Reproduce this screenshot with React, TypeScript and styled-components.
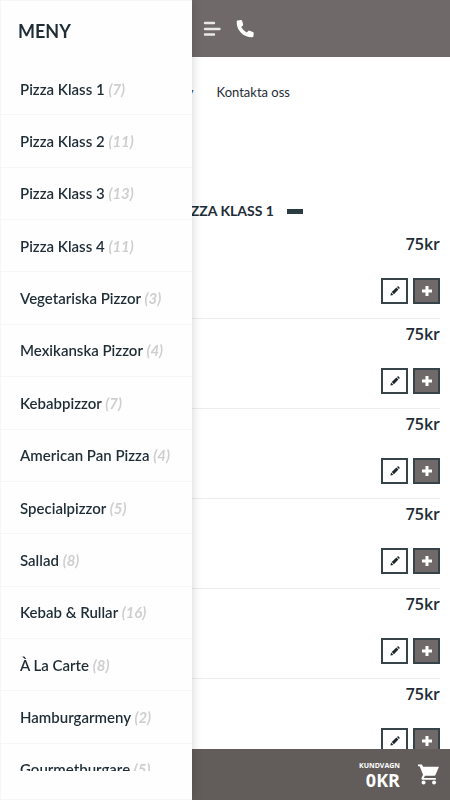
import React from "react";
import styled, { createGlobalStyle } from "styled-components";

const GlobalStyle = createGlobalStyle`
  * { box-sizing: border-box; }
  body { margin: 0; background: #fff; color: #1f2d36; font-family: Lato, sans-serif; overflow: hidden; }
  a { color: inherit; text-decoration: none; }
  button { padding: 0; border: 0; background: none; color: inherit; font: inherit; cursor: pointer; }
  svg { display: block; }
`;

const Page = styled.div`
  height: 100vh;
  display: flex;
  flex-direction: column;
`;

const TopBar = styled.header`
  flex: none;
  display: flex;
  align-items: center;
  gap: 15px;
  height: 57px;
  padding-left: 203px;
  background: #6f6a69;
  color: #fff;
`;

const Main = styled.main`
  flex: 1;
  min-height: 0;
  overflow: hidden;
`;

const Nav = styled.nav`
  display: flex;
  gap: 23px;
  padding: 24px 0 0 161px;
  font-size: 13px;
  line-height: 22px;
`;

const SectionTitle = styled.h2`
  display: flex;
  align-items: center;
  gap: 13px;
  margin: 98px 0 8px;
  padding-left: 178px;
  font-size: 14px;
  line-height: 20px;
  font-weight: 700;
`;

const Dash = styled.span`
  width: 16px;
  height: 5px;
  background: #2b3b42;
`;

const Products = styled.ul`
  list-style: none;
  margin: 0;
  padding: 0 10px;
`;

const Product = styled.li`
  display: flex;
  flex-direction: column;
  align-items: flex-end;
  justify-content: space-between;
  height: 90px;
  padding: 3px 0 14px;
  border-bottom: 1px solid #ececec;
`;

const Price = styled.span`
  font-family: "Open Sans", sans-serif;
  font-size: 16px;
  line-height: 24px;
  font-weight: 600;
`;

const Actions = styled.div`
  display: flex;
  gap: 5px;
`;

const ActionButton = styled.button<{ $filled?: boolean }>`
  display: grid;
  place-items: center;
  width: 27px;
  height: 26px;
  border: 2px solid #36444a;
  background: ${(p) => (p.$filled ? "#6f6a69" : "#fff")};
  color: ${(p) => (p.$filled ? "#fff" : "#1c2529")};
`;

const CartBar = styled.footer`
  flex: none;
  display: flex;
  align-items: center;
  justify-content: flex-end;
  gap: 18px;
  height: 51px;
  padding-right: 11px;
  background: #625c5b;
  color: #fff;
  text-align: right;
`;

const CartLabel = styled.div`
  font-family: "Open Sans", sans-serif;
  font-size: 7px;
  line-height: 10px;
  font-weight: 700;
`;

const CartTotal = styled.div`
  font-family: "Open Sans", sans-serif;
  font-size: 18px;
  line-height: 18px;
  font-weight: 700;
`;

const Drawer = styled.aside`
  position: fixed;
  inset: 0 auto 0 0;
  z-index: 2;
  display: flex;
  flex-direction: column;
  width: 192px;
  padding-bottom: 28px;
  border: 1px solid #f6f6f6;
  border-right: 0;
  background: #fefefe;
  box-shadow: 0 0 10px rgba(0, 0, 0, 0.18);
`;

const DrawerTitle = styled.h1`
  flex: none;
  margin: 0;
  padding: 18px 17px 20px;
  font-size: 18px;
  line-height: 24px;
  font-weight: 700;
`;

const DrawerBody = styled.nav`
  flex: 1;
  min-height: 0;
  overflow: hidden;
`;

const CategoryList = styled.ul`
  display: grid;
  grid-auto-rows: 1fr;
  height: 733px;
  margin: 0;
  padding: 0;
  list-style: none;
`;

const Category = styled.li`
  display: flex;
  align-items: center;
  padding-left: 19px;
  border-bottom: 1px solid #f6f6f6;
  font-size: 15px;
  font-weight: 600;
  white-space: nowrap;
`;

const Count = styled.em`
  color: #cfcfcf;
  font-weight: 700;
`;

const categories: [string, number][] = [
  ["Pizza Klass 1", 7],
  ["Pizza Klass 2", 11],
  ["Pizza Klass 3", 13],
  ["Pizza Klass 4", 11],
  ["Vegetariska Pizzor", 3],
  ["Mexikanska Pizzor", 4],
  ["Kebabpizzor", 7],
  ["American Pan Pizza", 4],
  ["Specialpizzor", 5],
  ["Sallad", 8],
  ["Kebab & Rullar", 16],
  ["À La Carte", 8],
  ["Hamburgarmeny", 2],
  ["Gourmetburgare", 5],
];

const prices = [75, 75, 75, 75, 75, 75];

const MenuIcon = () => (
  <svg width="18" height="16" viewBox="0 0 18 16" stroke="#e9e8e8" strokeWidth="2.4" strokeLinecap="round">
    <path d="M2 2h9M2 8h14.5M2 13.5h9" />
  </svg>
);

const PhoneIcon = () => (
  <svg width="18" height="18" viewBox="0 0 18 18" fill="currentColor">
    <path d="M.7 1.4Q.8.5 1.7.4L4.8.1Q5.9 0 6.2 1L7.1 4.3Q7.3 5.1 6.7 5.7L5.2 7.1Q7 10.7 10.7 12.5L12.2 11Q12.8 10.4 13.6 10.7L16.9 11.9Q17.7 12.2 17.7 13.1L17.5 15.9Q17.3 17.3 15.9 17.3Q9.3 17.2 5 12.8Q.6 8.3.7 1.4Z" />
  </svg>
);

const PencilIcon = () => (
  <svg width="10" height="10" viewBox="0 0 10 10" fill="currentColor">
    <path d="M0.4 9.6l.7-3L3.4 8.9z" />
    <path d="M1.7 6l4.7-4.4 2 2L3.9 8.3z" />
    <path d="M7 1.1l.6-.6c.3-.3.7-.3 1 0l.9.9c.3.3.3.7 0 1l-.6.6z" />
  </svg>
);

const PlusIcon = () => (
  <svg width="10" height="10" viewBox="0 0 10 10" stroke="currentColor" strokeWidth="3">
    <path d="M5 0v10M0 5h10" />
  </svg>
);

const CartIcon = () => (
  <svg width="21" height="21" viewBox="0 0 20 20" fill="currentColor">
    <path d="M0 .5h3.8l1 2.200H20L16.6 10.500Q16.300 11.200 15.500 11.200H6.600L5.600 13.300H17V15H4.300Q2.900 14.800 3.300 13.300L4.800 10.300 1.600 2.200H0z" />
    <circle cx="5.3" cy="17.7" r="1.9" />
    <circle cx="15.3" cy="17.7" r="1.9" />
  </svg>
);

export default function App() {
  return (
    <>
      <GlobalStyle />
      <Page>
        <TopBar>
          <button aria-label="Meny"><MenuIcon /></button>
          <a href="tel:" aria-label="Ring oss"><PhoneIcon /></a>
        </TopBar>
        <Main>
          <Nav>
            <a href="#meny">Meny</a>
            <a href="#kontakt">Kontakta oss</a>
          </Nav>
          <SectionTitle>PIZZA KLASS 1 <Dash /></SectionTitle>
          <Products>
            {prices.map((price, i) => (
              <Product key={i}>
                <Price>{price}kr</Price>
                <Actions>
                  <ActionButton aria-label="Ändra"><PencilIcon /></ActionButton>
                  <ActionButton $filled aria-label="Lägg till"><PlusIcon /></ActionButton>
                </Actions>
              </Product>
            ))}
          </Products>
        </Main>
        <CartBar>
          <div>
            <CartLabel>KUNDVAGN</CartLabel>
            <CartTotal>0KR</CartTotal>
          </div>
          <button aria-label="Visa kundvagn"><CartIcon /></button>
        </CartBar>
      </Page>
      <Drawer>
        <DrawerTitle>MENY</DrawerTitle>
        <DrawerBody>
          <CategoryList>
            {categories.map(([name, count]) => (
              <Category key={name}>
                <a href="#kategori">{name} <Count>({count})</Count></a>
              </Category>
            ))}
          </CategoryList>
        </DrawerBody>
      </Drawer>
    </>
  );
}
